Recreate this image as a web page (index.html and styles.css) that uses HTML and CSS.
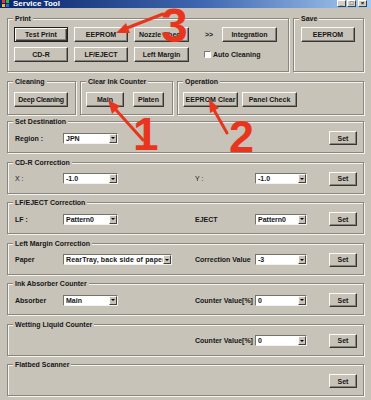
FILE: index.html
```html
<!doctype html>
<html>
<head>
<meta charset="utf-8">
<title>Service Tool</title>
<link rel="stylesheet" href="styles.css">
</head>
<body>
<div class="window">
	<div class="titlebar">
		<svg class="app-icon" width="7" height="7" viewBox="0 0 7 7">
			<rect x="0" y="0" width="3" height="3" fill="#e03c28"/>
			<rect x="4" y="0" width="3" height="3" fill="#3cb04a"/>
			<rect x="0" y="4" width="3" height="3" fill="#f0c020"/>
			<rect x="4" y="4" width="3" height="3" fill="#2a6ad0"/>
		</svg>
		<span class="title">Service Tool</span>
		<div class="caption-btns">
			<span class="cb">_</span>
			<span class="cb">&#9633;</span>
			<span class="cb cb-close">&#215;</span>
		</div>
	</div>

	<div class="client">
		<div class="row row-top">
			<fieldset class="grp grp-print">
				<legend>Print</legend>
				<div class="print-grid">
					<button class="btn default">Test Print</button>
					<button class="btn">EEPROM</button>
					<button class="btn">Nozzle Check</button>
					<span class="chev">&gt;&gt;</span>
					<button class="btn">Integration</button>
					<button class="btn">CD-R</button>
					<button class="btn">LF/EJECT</button>
					<button class="btn">Left Margin</button>
					<label class="check"><span class="box"></span>Auto Cleaning</label>
				</div>
			</fieldset>
			<fieldset class="grp grp-save">
				<legend>Save</legend>
				<div class="btn-row save-row">
					<button class="btn w54">EEPROM</button>
				</div>
			</fieldset>
		</div>

		<div class="row row-mid">
			<fieldset class="grp grp-clean">
				<legend>Cleaning</legend>
				<div class="btn-row clean-row">
					<button class="btn w54 tight">Deep Cleaning</button>
				</div>
			</fieldset>
			<fieldset class="grp grp-ink">
				<legend>Clear Ink Counter</legend>
				<div class="btn-row ink-row">
					<button class="btn w38">Main</button>
					<button class="btn w31">Platen</button>
				</div>
			</fieldset>
			<fieldset class="grp grp-op">
				<legend>Operation</legend>
				<div class="btn-row op-row">
					<button class="btn w55">EEPROM Clear</button>
					<button class="btn w55">Panel Check</button>
				</div>
			</fieldset>
		</div>

		<fieldset class="grp wide first">
			<legend>Set Destination</legend>
			<div class="line">
				<span class="lbl">Region :</span>
				<div class="combo"><span class="val">JPN</span><span class="drop"></span></div>
				<button class="btn set">Set</button>
			</div>
		</fieldset>

		<fieldset class="grp wide">
			<legend>CD-R Correction</legend>
			<div class="line">
				<span class="lbl thin">X :</span>
				<div class="combo"><span class="val">-1.0</span><span class="drop"></span></div>
				<span class="lbl thin c4">Y :</span>
				<div class="combo c5"><span class="val">-1.0</span><span class="drop"></span></div>
				<button class="btn set">Set</button>
			</div>
		</fieldset>

		<fieldset class="grp wide">
			<legend>LF/EJECT Correction</legend>
			<div class="line">
				<span class="lbl">LF :</span>
				<div class="combo"><span class="val">Pattern0</span><span class="drop"></span></div>
				<span class="lbl c4">EJECT</span>
				<div class="combo c5"><span class="val">Pattern0</span><span class="drop"></span></div>
				<button class="btn set">Set</button>
			</div>
		</fieldset>

		<fieldset class="grp wide">
			<legend>Left Margin Correction</legend>
			<div class="line">
				<span class="lbl">Paper</span>
				<div class="combo long"><span class="val">RearTray, back side of paper</span><span class="drop"></span></div>
				<span class="lbl c4">Correction Value</span>
				<div class="combo c5"><span class="val">-3</span><span class="drop"></span></div>
				<button class="btn set">Set</button>
			</div>
		</fieldset>

		<fieldset class="grp wide">
			<legend>Ink Absorber Counter</legend>
			<div class="line">
				<span class="lbl">Absorber</span>
				<div class="combo"><span class="val">Main</span><span class="drop"></span></div>
				<span class="lbl c4">Counter Value[%]</span>
				<div class="combo c5"><span class="val">0</span><span class="drop"></span></div>
				<button class="btn set">Set</button>
			</div>
		</fieldset>

		<fieldset class="grp wide">
			<legend>Wetting Liquid Counter</legend>
			<div class="line">
				<span class="lbl c4">Counter Value[%]</span>
				<div class="combo c5"><span class="val">0</span><span class="drop"></span></div>
				<button class="btn set">Set</button>
			</div>
		</fieldset>

		<fieldset class="grp wide">
			<legend>Flatbed Scanner</legend>
			<div class="line">
				<button class="btn set">Set</button>
			</div>
		</fieldset>
	</div>

	<!-- red notes drawn over the dialog -->
	<svg class="notes" width="371" height="400" viewBox="0 0 371 400">
		<g stroke="#e8361e" stroke-width="3" stroke-linecap="round">
			<line x1="163" y1="14" x2="127" y2="28"/>
			<line x1="116" y1="110" x2="143" y2="140"/>
			<line x1="214" y1="110" x2="227" y2="133"/>
		</g>
		<g fill="#e8361e">
			<polygon points="116,33 130,33 126,23"/>
			<polygon points="108,100 112,114 120,106"/>
			<polygon points="209,99 210,113 219,108"/>
			<text x="161" y="42" class="num">3</text>
			<text x="133" y="150" class="num n1">1</text>
			<text x="229" y="152" class="num n2">2</text>
		</g>
	</svg>
</div>
</body>
</html>
```

FILE: styles.css
```css
* { box-sizing: border-box; }
body { margin: 0; background: #c8c3b9; font: bold 7px "Liberation Sans", Arial, sans-serif; color: #161616; }
.window { position: relative; width: 371px; height: 400px; overflow: hidden; background: #c8c3b9; }

/* title bar */
.titlebar { height: 8px; display: flex; align-items: flex-start; overflow: hidden;
	background: linear-gradient(90deg, #0a246a 0%, #3f68b0 55%, #a6caf0 100%); }
.app-icon { margin: 0 4px 0 2px; flex: none; }
.title { color: #fff; font-size: 8px; line-height: 7px; }
.caption-btns { margin-left: auto; margin-right: 4px; display: flex; gap: 1px; }
.cb { width: 9px; height: 7px; background: #d4d0c8; border: 1px solid; border-color: #fff #404040 #404040 #fff;
	font: bold 6px/5px "Liberation Sans", sans-serif; color: #000; text-align: center; }
.cb-close { margin-left: 1px; }

/* client area */
.client { padding: 6px 7px 0 7px; }
.row { display: flex; gap: 4px; }
.row-top { height: 58px; }
.row-mid { height: 38px; margin-top: 5px; }

.grp { margin: 0; padding: 0; min-width: 0; border: 1px solid #8a857d;
	box-shadow: 1px 1px 0 #f6f4f0, inset 1px 1px 0 #f6f4f0; }
.grp legend { margin-left: 5px; padding: 0 2px; line-height: 9px; background: #c8c3b9; white-space: nowrap; }

.grp-print { width: 282px; height: 58px; }
.grp-save { width: 71px; height: 58px; }
.grp-clean { width: 69px; height: 38px; }
.grp-ink { width: 93px; height: 38px; }
.grp-op { width: 187px; height: 38px; }
.wide { width: 357px; height: 36px; margin-top: 4.5px; }
.wide.first { margin-top: 2px; }

/* buttons */
.btn { height: 15px; padding: 0; margin: 0; font: inherit; color: inherit; background: #c8c3b9;
	border: 1px solid; border-color: #fbfaf8 #363636 #363636 #fbfaf8;
	box-shadow: inset -1px -1px 0 #868179; white-space: nowrap; overflow: hidden; text-align: center; }
.btn.default { border-color: #1e1e1e;
	box-shadow: inset 1px 1px 0 #fbfaf8, inset -1px -1px 0 #363636, inset -2px -2px 0 #868179; }
.tight { letter-spacing: -0.25px; }
.w54 { width: 54px; }
.w55 { width: 55px; }
.w38 { width: 38px; }
.w31 { width: 31px; }

.print-grid { display: grid; grid-template-columns: 54px 54px 55px 21px 55px; grid-template-rows: 15px 15px;
	column-gap: 6px; row-gap: 5px; padding: 4px 0 0 6px; }
.chev { align-self: center; padding-left: 10px; }
.check { grid-column: 4 / span 2; display: flex; align-items: center; gap: 2px; padding-left: 9px; }
.box { width: 7px; height: 7px; background: #fff; border: 1px solid; border-color: #7c7870 #fff #fff #7c7870; }

.btn-row { display: flex; }
.save-row { padding: 4px 0 0 7px; }
.clean-row { padding: 6px 0 0 6px; }
.ink-row { padding: 6px 0 0 5px; gap: 9px; }
.op-row { padding: 6px 0 0 5px; gap: 4px; }

/* setting lines */
.line { display: grid; grid-template-columns: 48px 109px 23px 60px 52px 22px 28px; grid-template-rows: 14px;
	align-items: center; padding: 5px 0 0 7px; }
.lbl { white-space: nowrap; }
.thin { font-weight: normal; }
.c4 { grid-column: 4; }
.c5 { grid-column: 5; }
.set { grid-column: 7; height: 14px; }

.combo { display: flex; align-items: center; width: 55px; height: 11px; background: #fff;
	border: 1px solid; border-color: #77736b #f4f2ee #f4f2ee #77736b; }
.combo.long { width: 109px; }
.combo.long .val { letter-spacing: 0.15px; }
.combo.c5 { width: auto; }
.combo .val { flex: 1; min-width: 0; padding-left: 2px; line-height: 9px; overflow: hidden; white-space: nowrap; }
.combo .drop { flex: none; width: 8px; height: 9px; background: #c8c3b9; border: 1px solid;
	border-color: #fbfaf8 #404040 #404040 #fbfaf8; display: flex; align-items: center; justify-content: center; }
.combo .drop::after { content: ""; border-left: 2px solid transparent; border-right: 2px solid transparent;
	border-top: 2px solid #000; }

/* annotations */
.notes { position: absolute; left: 0; top: 0; pointer-events: none; }
.num { font: bold 48px "Liberation Sans", Arial, sans-serif; }
.n1 { font-size: 46px; }
.n2 { font-size: 45px; }
```
